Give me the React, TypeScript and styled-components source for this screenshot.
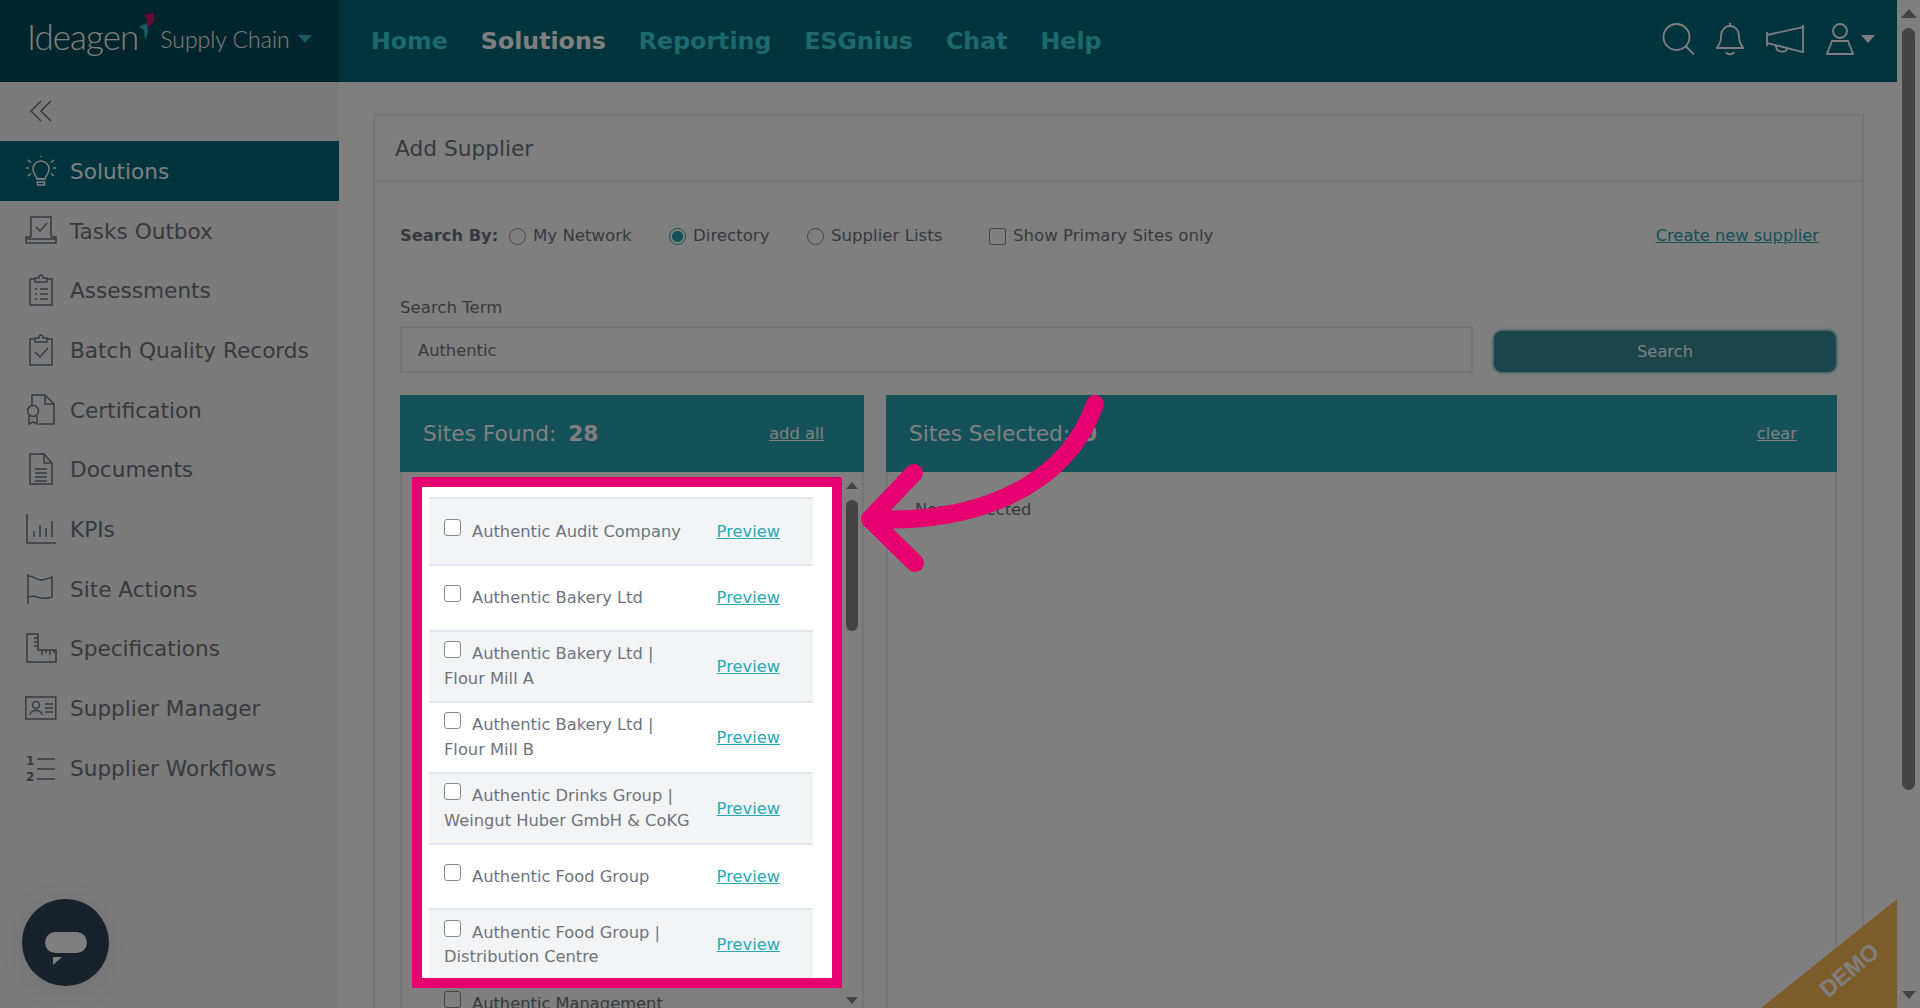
import React from 'react';
import styled, { createGlobalStyle } from 'styled-components';

const GlobalStyle = createGlobalStyle`
  html, body {
    margin: 0;
    height: 100%;
    overflow: hidden;
    background: #fff;
    font-family: "DejaVu Sans", Verdana, sans-serif;
  }
  * { box-sizing: border-box; }
`;

const ICON_PROPS = {
  fill: 'none',
  stroke: 'currentColor',
  strokeWidth: 1.5,
};

const sideIcons: Record<string, React.ReactNode> = {
  Solutions: (
    <>
      <path d="M12 24c0-3-4-5-4-10a8 8 0 0 1 16 0c0 5-4 7-4 10z" />
      <path d="M12.5 27h7v3h-7zM12 24h8" />
      <path d="M1 13h3M28 13h3M3 5l3 2.500M29 5l-3 2.500M3 21l3-2.500M29 21l-3-2.500M16 1v1" />
    </>
  ),
  'Tasks Outbox': (
    <>
      <path d="M6 22V2h20v20" />
      <path d="M11 12l4 4 7-8" />
      <path d="M6 22H1v6h30v-6h-5M1 24h30" />
    </>
  ),
  Assessments: (
    <>
      <path d="M10 5H5v26h22V5h-5" />
      <path d="M10 8V4h4c0-4 4-4 4 0h4v4z" />
      <path d="M10 15h2M15 15h8M10 20h2M15 20h8M10 25h2M15 25h8" />
    </>
  ),
  'Batch Quality Records': (
    <>
      <path d="M10 5H5v26h22V5h-5" />
      <path d="M10 8V4h4c0-4 4-4 4 0h4v4z" />
      <path d="M10 18l5 5 8-9" />
    </>
  ),
  Certification: (
    <>
      <path d="M7 11V1h13l9 9v20H14" />
      <path d="M20 1v9h9" />
      <circle cx="8" cy="17" r="5.500" />
      <path d="M4 22v8l4-2 4 2v-8" />
    </>
  ),
  Documents: (
    <>
      <path d="M5 1h14l8 9v21H5z" />
      <path d="M19 1v9h8M10 16h12M10 20h12M10 24h12M10 28h12" />
    </>
  ),
  KPIs: (
    <>
      <path d="M2 1v29h29" />
      <path d="M9 24v-6M15 24V12M21 24v-9M27 24V8" />
    </>
  ),
  'Site Actions': (
    <>
      <path d="M3 31V1" />
      <path d="M3 3c6 0 9 4 13 4 5 0 8-2 11-3v20c-3 1-6 2-11 1-4-1-8-3-13-1" />
    </>
  ),
  Specifications: (
    <>
      <path d="M2 2h11v16h18v12H2z" />
      <path d="M9 6h4M9 10h4M9 14h4M17 18v5M21 18v3M25 18v5M29 18v3" />
    </>
  ),
  'Supplier Manager': (
    <>
      <rect x="0.800" y="5" width="30" height="22" />
      <circle cx="11" cy="13" r="3.500" />
      <path d="M5 23c0-6 12-6 12 0M20 12h8M20 16h8M20 20h8" />
    </>
  ),
  'Supplier Workflows': (
    <>
      <path d="M12 7h18M12 17h18M12 27h18" />
      <text x="1" y="13" fontSize="12" fontWeight="700" fill="currentColor" stroke="none">1</text>
      <text x="1" y="29" fontSize="12" fontWeight="700" fill="currentColor" stroke="none">2</text>
    </>
  ),
};

const sideItems = Object.keys(sideIcons);

const navItems = ['Home', 'Solutions', 'Reporting', 'ESGnius', 'Chat', 'Help'];

const sites: { name: string; sub?: string; tall?: boolean }[] = [
  { name: 'Authentic Audit Company' },
  { name: 'Authentic Bakery Ltd' },
  { name: 'Authentic Bakery Ltd |', sub: 'Flour Mill A' },
  { name: 'Authentic Bakery Ltd |', sub: 'Flour Mill B' },
  { name: 'Authentic Drinks Group |', sub: 'Weingut Huber GmbH & CoKG' },
  { name: 'Authentic Food Group' },
  { name: 'Authentic Food Group |', sub: 'Distribution Centre' },
  { name: 'Authentic Management', tall: true },
];

export default function App() {
  return (
    <Shell>
      <GlobalStyle />
      <PageArea>
        <Header>
          <Brand>
            <LogoWord>Ideagen</LogoWord>
            <LogoMark viewBox="0 0 16 30">
              <path d="M5 3l10-2v8l-6 7-1-9z" fill="#d6116e" />
              <path d="M0 15l8-4 1 9-3 8-1-10z" fill="#36b6c4" />
            </LogoMark>
            <ProductName>Supply Chain</ProductName>
            <Caret $color="#36b6c4" />
          </Brand>
          <Nav>
            {navItems.map((item) => (
              <NavLink key={item} $active={item === 'Solutions'}>
                {item}
              </NavLink>
            ))}
          </Nav>
          <HeaderIcons>
            <HeaderIcon width="32" height="32" viewBox="0 0 32 32">
              <circle cx="14.500" cy="14" r="13" />
              <path d="M24 23.500L32 31.500" />
            </HeaderIcon>
            <HeaderIcon width="28" height="32" viewBox="0 0 28 32">
              <path d="M1 25h26c0-2-4-3-4-12 0-6-4-10-9-10S5 7 5 13c0 9-4 10-4 12zM14 3V0M10 29c1 3 7 3 8 0" />
            </HeaderIcon>
            <HeaderIcon width="38" height="28" viewBox="0 0 38 28">
              <path d="M1 10L37 2v25L1 18zM1 7v14M37 0v28" />
              <path d="M10 21c0 7 10 7 11 3" />
            </HeaderIcon>
            <UserMenu>
              <HeaderIcon width="28" height="32" viewBox="0 0 28 32">
                <circle cx="14" cy="8" r="7" />
                <path d="M6 18h16l5 13H1z" />
              </HeaderIcon>
              <Caret $color="#fff" />
            </UserMenu>
          </HeaderIcons>
        </Header>

        <Body>
          <Sidebar>
            <Collapse>
              <svg width="24" height="24" viewBox="0 0 24 24" {...ICON_PROPS}>
                <path d="M12 2L2 12l10 10M22 2L12 12l10 10" />
              </svg>
            </Collapse>
            {sideItems.map((item) => (
              <SideItem key={item} $active={item === 'Solutions'}>
                <svg width="32" height="32" viewBox="0 0 32 32" {...ICON_PROPS}>
                  {sideIcons[item]}
                </svg>
                <span>{item}</span>
              </SideItem>
            ))}
          </Sidebar>

          <Main>
            <Card>
              <CardTitle>Add Supplier</CardTitle>
              <CardBody>
                <SearchBy>
                  <SearchByLabel>Search By:</SearchByLabel>
                  <Option $width={160}>
                    <Radio type="radio" name="by" readOnly />
                    My Network
                  </Option>
                  <Option $width={138}>
                    <Radio type="radio" name="by" defaultChecked />
                    Directory
                  </Option>
                  <Option $width={182}>
                    <Radio type="radio" name="by" readOnly />
                    Supplier Lists
                  </Option>
                  <Option $width={300}>
                    <Check type="checkbox" readOnly />
                    Show Primary Sites only
                  </Option>
                  <CreateLink>Create new supplier</CreateLink>
                </SearchBy>

                <TermLabel>Search Term</TermLabel>
                <TermRow>
                  <TermInput defaultValue="Authentic" />
                  <SearchButton>Search</SearchButton>
                </TermRow>

                <Panels>
                  <FoundPanel>
                    <PanelHeader>
                      <PanelTitle>
                        Sites Found: <strong>28</strong>
                      </PanelTitle>
                      <PanelAction>add all</PanelAction>
                    </PanelHeader>
                    <PanelBody>
                      <RowList>
                        {sites.map((site, i) => (
                          <SiteRow key={site.name + i} $striped={i % 2 === 0} $tall={site.tall}>
                            <SiteName>
                              <RowCheck type="checkbox" readOnly />
                              {site.name}
                              {site.sub && (
                                <>
                                  <br />
                                  {site.sub}
                                </>
                              )}
                            </SiteName>
                            <PreviewLink>Preview</PreviewLink>
                          </SiteRow>
                        ))}
                      </RowList>
                      <ListScroll>
                        <ArrowUp $size={6} />
                        <ListThumb />
                        <ArrowDown $size={6} />
                      </ListScroll>
                    </PanelBody>
                  </FoundPanel>

                  <SelectedPanel>
                    <PanelHeader>
                      <PanelTitle>
                        Sites Selected: <strong>0</strong>
                      </PanelTitle>
                      <PanelAction>clear</PanelAction>
                    </PanelHeader>
                    <SelectedBody>None selected</SelectedBody>
                  </SelectedPanel>
                </Panels>
              </CardBody>
            </Card>
          </Main>
        </Body>

        <ChatButton>
          <svg width="44" height="34" viewBox="0 0 44 34">
            <rect x="1" y="1" width="42" height="21" rx="10.500" fill="#fff" />
            <path d="M9 26h9l-9 8z" fill="#fff" />
          </svg>
        </ChatButton>
        <DemoRibbon>
          <DemoText>DEMO</DemoText>
        </DemoRibbon>
      </PageArea>

      <PageScroll>
        <ArrowUp $size={8} />
        <PageThumb />
        <ArrowDown $size={7} />
      </PageScroll>

      <Highlight />
      <PointerArrow viewBox="0 0 260 190" fill="none">
        <path
          d="M245 14C215 100 120 134 20 129M64 83L20 129l45 44"
          stroke="#e6006f"
          strokeWidth="18"
          strokeLinecap="round"
          strokeLinejoin="round"
        />
      </PointerArrow>
    </Shell>
  );
}

const Shell = styled.div`
  position: relative;
  display: flex;
  width: 100vw;
  height: 100vh;
  overflow: hidden;
  font-size: 16.300px;
  color: #6c757d;
`;

const PageArea = styled.div`
  position: relative;
  flex: 1;
  display: flex;
  flex-direction: column;
  min-width: 0;
`;

const Header = styled.header`
  display: flex;
  align-items: center;
  height: 82px;
  flex-shrink: 0;
  background: #04687a;
`;

const Brand = styled.div`
  display: flex;
  align-items: center;
  width: 339px;
  height: 100%;
  padding: 0 0 5px 27px;
  background: #004a58;
  color: #fff;
`;

const LogoWord = styled.span`
  font-family: "Lato", sans-serif;
  font-size: 35px;
  font-weight: 300;
  letter-spacing: -1px;
  margin-top: -6px;
`;

const LogoMark = styled.svg`
  width: 16px;
  height: 30px;
  margin: -24px 0 0 1px;
`;

const ProductName = styled.span`
  font-family: "Lato", sans-serif;
  font-size: 23px;
  font-weight: 300;
  margin: 0 8px 0 5px;
`;

const Caret = styled.span<{ $color: string }>`
  width: 0;
  height: 0;
  border-left: 7.500px solid transparent;
  border-right: 7.500px solid transparent;
  border-top: 8px solid ${(p) => p.$color};
`;

const Nav = styled.nav`
  display: flex;
  gap: 33px;
  padding-left: 32px;
  flex: 1;
`;

const NavLink = styled.a<{ $active?: boolean }>`
  font-size: 23.700px;
  font-weight: 700;
  color: ${(p) => (p.$active ? '#fff' : '#38d3dc')};
`;

const HeaderIcons = styled.div`
  display: flex;
  align-items: center;
  gap: 22px;
  padding: 0 22px 4px 0;
`;

const HeaderIcon = styled.svg`
  fill: none;
  stroke: #fff;
  stroke-width: 1.800;
  overflow: visible;
`;

const UserMenu = styled.div`
  display: flex;
  align-items: center;
  gap: 7px;
`;

const Body = styled.div`
  flex: 1;
  display: flex;
  min-height: 0;
`;

const Sidebar = styled.aside`
  width: 339px;
  flex-shrink: 0;
  background: #f6f6f6;
`;

const Collapse = styled.div`
  display: flex;
  align-items: center;
  height: 59px;
  padding: 0 0 1px 29px;
  color: #6c757d;
`;

const SideItem = styled.div<{ $active?: boolean }>`
  display: flex;
  align-items: center;
  gap: 13px;
  height: 59.700px;
  padding-left: 25px;
  font-size: 21.600px;
  color: ${(p) => (p.$active ? '#fff' : '#6c757d')};
  background: ${(p) => (p.$active ? '#04687a' : 'transparent')};

  span {
    padding-top: 1px;
  }
`;

const Main = styled.main`
  flex: 1;
  display: flex;
  min-width: 0;
  padding: 32px 33px 0 34px;
  background: #fff;
`;

const Card = styled.section`
  flex: 1;
  display: flex;
  flex-direction: column;
  min-width: 0;
  border: 2px solid #ececec;
  border-bottom: none;
`;

const CardTitle = styled.h2`
  display: flex;
  align-items: center;
  height: 66px;
  margin: 0;
  padding-left: 20px;
  font-size: 21.700px;
  font-weight: 400;
  border-bottom: 2px solid #ececec;
`;

const CardBody = styled.div`
  flex: 1;
  display: flex;
  flex-direction: column;
  min-height: 0;
  padding: 0 25px;
`;

const SearchBy = styled.div`
  display: flex;
  align-items: center;
  height: 30px;
  margin-top: 38px;
  font-size: 16.600px;
`;

const SearchByLabel = styled.span`
  width: 109px;
  font-size: 16.300px;
  font-weight: 700;
`;

const Option = styled.label<{ $width: number }>`
  display: flex;
  align-items: center;
  gap: 7px;
  width: ${(p) => p.$width}px;
`;

const Radio = styled.input`
  appearance: none;
  width: 17px;
  height: 17px;
  margin: 2px 0 0;
  border: 1.500px solid #8a8a8a;
  border-radius: 50%;
  background: #fff;

  &:checked {
    border-color: #2aa2b0;
    background: radial-gradient(circle, #2aa2b0 0 5px, #fff 6px);
  }
`;

const Check = styled.input`
  appearance: none;
  width: 17px;
  height: 17px;
  margin: 2px 0 0;
  border: 1.500px solid #8a8a8a;
  border-radius: 2px;
  background: #fff;
`;

const CreateLink = styled.a`
  margin-left: auto;
  margin-right: 18px;
  font-size: 16.300px;
  color: #2aa2b0;
  text-decoration: underline;
`;

const TermLabel = styled.div`
  height: 24px;
  margin-top: 46px;
  font-size: 16.600px;
  line-height: 24px;
`;

const TermRow = styled.div`
  display: flex;
  gap: 22px;
  height: 47px;
  margin-top: 6px;
`;

const TermInput = styled.input`
  flex: 1;
  min-width: 0;
  padding: 2px 16px 0;
  border: 2px solid #ececec;
  font: inherit;
  color: #6c757d;
  outline: none;
`;

const SearchButton = styled.button`
  align-self: flex-end;
  width: 342px;
  height: 41px;
  margin: 0 1px 1px -1px;
  border: none;
  border-radius: 8px;
  background: #388c98;
  box-shadow: 0 0 3px 1px #5fb0ba;
  color: #fff;
  font: inherit;
`;

const Panels = styled.div`
  flex: 1;
  display: flex;
  gap: 22px;
  min-height: 0;
  margin-top: 22px;
`;

const FoundPanel = styled.div`
  display: flex;
  flex-direction: column;
  width: 464px;
  flex-shrink: 0;
`;

const SelectedPanel = styled.div`
  flex: 1;
  display: flex;
  flex-direction: column;
  min-width: 0;
`;

const PanelHeader = styled.div`
  display: flex;
  align-items: center;
  justify-content: space-between;
  height: 77px;
  flex-shrink: 0;
  padding: 0 40px 0 23px;
  background: #2aa2b0;
  color: #fff;
`;

const PanelTitle = styled.div`
  font-size: 21.700px;

  strong {
    margin-left: 5px;
  }
`;

const PanelAction = styled.a`
  text-decoration: underline;
`;

const PanelBody = styled.div`
  flex: 1;
  display: flex;
  min-height: 0;
  overflow: hidden;
  padding: 10px 4px 4px 27px;
  border: 2px solid #ececec;
  border-width: 0 2px;
`;

const RowList = styled.div`
  width: 384px;
  flex-shrink: 0;
  margin-top: 15px;
`;

const SiteRow = styled.div<{ $striped?: boolean; $tall?: boolean }>`
  display: flex;
  align-items: ${(p) => (p.$tall ? 'flex-start' : 'center')};
  justify-content: space-between;
  min-height: ${(p) => (p.$tall ? '80px' : '65.500px')};
  padding: 9.500px 33px 9.500px 15px;
  border-top: 2px solid #e3e6ea;
  background: ${(p) => (p.$striped ? '#f3f4f6' : '#fff')};

  &:first-child {
    min-height: 67px;
  }
`;

const SiteName = styled.div`
  line-height: 24.500px;
`;

const RowCheck = styled(Check)`
  width: 17px;
  height: 17px;
  margin: 0 11px 0 0;
  vertical-align: 1px;
  border-radius: 3px;
`;

const PreviewLink = styled.a`
  align-self: center;
  color: #29a9b5;
  text-decoration: underline;
`;

const ListScroll = styled.div`
  display: flex;
  flex-direction: column;
  align-items: center;
  width: 14px;
  margin-left: 32px;
`;

const ArrowUp = styled.span<{ $size: number }>`
  width: 0;
  height: 0;
  flex-shrink: 0;
  border-left: ${(p) => p.$size}px solid transparent;
  border-right: ${(p) => p.$size}px solid transparent;
  border-bottom: ${(p) => p.$size + 1}px solid #888;
`;

const ArrowDown = styled.span<{ $size: number }>`
  width: 0;
  height: 0;
  flex-shrink: 0;
  margin-top: auto;
  border-left: ${(p) => p.$size}px solid transparent;
  border-right: ${(p) => p.$size}px solid transparent;
  border-top: ${(p) => p.$size + 1}px solid #888;
`;

const ListThumb = styled.div`
  width: 12px;
  height: 131px;
  margin-top: 11px;
  border-radius: 6px;
  background: #888;
`;

const SelectedBody = styled.div`
  flex: 1;
  padding: 28px 27px;
  border: 2px solid #ececec;
  border-width: 0 2px;
`;

const ChatButton = styled.div`
  position: absolute;
  left: 22px;
  bottom: 22px;
  display: flex;
  align-items: center;
  justify-content: center;
  width: 87px;
  height: 87px;
  padding-top: 10px;
  border-radius: 50%;
  background: #30445a;
  box-shadow: 0 4px 30px rgba(0, 0, 0, 0.08);
`;

const DemoRibbon = styled.div`
  position: absolute;
  right: 0;
  bottom: 0;
  display: flex;
  align-items: flex-end;
  justify-content: flex-end;
  width: 136px;
  height: 109px;
  clip-path: polygon(100% 0, 100% 100%, 0 100%);
  background: #fab858;
`;

const DemoText = styled.span`
  margin: 0 13px 24px 0;
  transform: rotate(-40deg);
  font-family: "Liberation Sans", Arial, sans-serif;
  font-size: 23px;
  font-weight: 700;
  color: #fff;
`;

const PageScroll = styled.div`
  display: flex;
  flex-direction: column;
  align-items: center;
  width: 23px;
  flex-shrink: 0;
  padding: 9px 0 9px;
  background: #fff;
`;

const PageThumb = styled.div`
  width: 13px;
  height: 762px;
  margin-top: 10px;
  border-radius: 7px;
  background: #888;
`;

const Highlight = styled.div`
  position: absolute;
  left: 412px;
  top: 477px;
  width: 430px;
  height: 511px;
  border: 10px solid #e6006f;
  box-shadow: 0 0 0 3000px rgba(0, 0, 0, 0.5);
  pointer-events: none;
`;

const PointerArrow = styled.svg`
  position: absolute;
  left: 850px;
  top: 390px;
  width: 260px;
  height: 190px;
  pointer-events: none;
`;
